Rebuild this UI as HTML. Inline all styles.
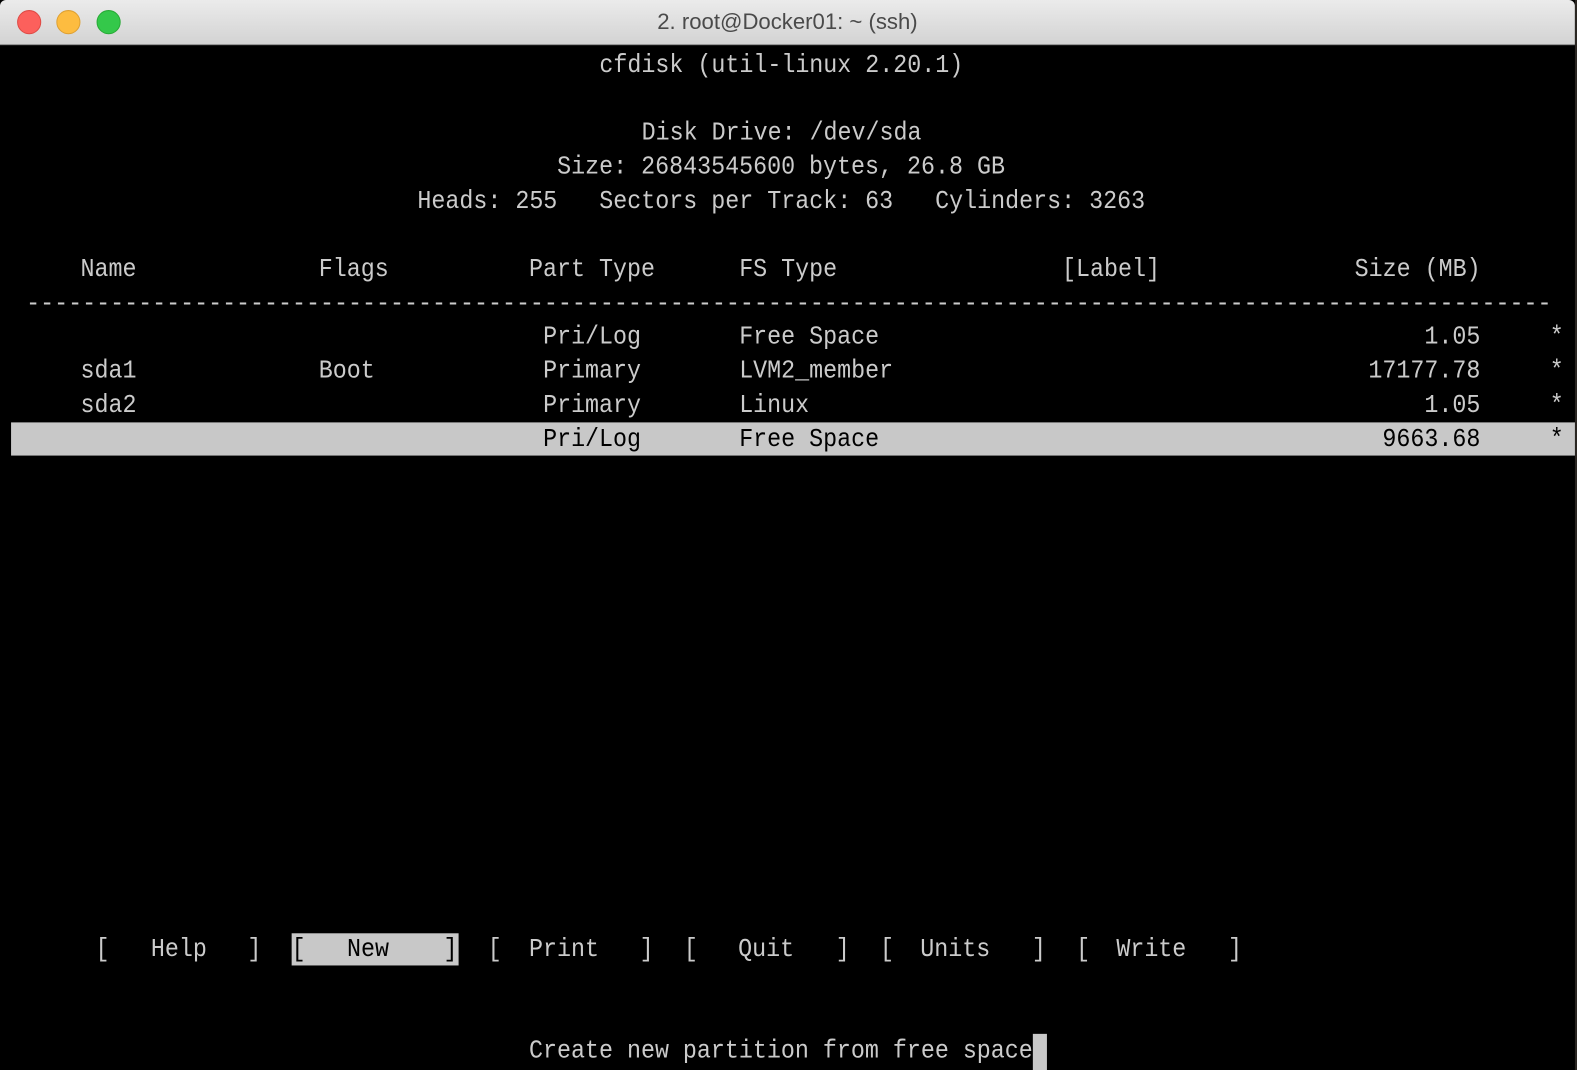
<!DOCTYPE html>
<html><head><meta charset="utf-8"><style>
html,body{margin:0;padding:0;width:1577px;height:1064px;overflow:hidden;background:#2a2622}
#wrap{position:absolute;left:0;top:0;width:1568px;height:1058px;transform:scale(1.0057);transform-origin:0 0}
#win{position:absolute;left:0;top:0;width:1566px;height:1064px;background:#000;}
#tb{position:absolute;left:0;top:0;width:1566px;height:44px;background:linear-gradient(#ebebeb,#d3d3d3);border-bottom:1px solid #b0b0b0;border-radius:6px 6px 0 0}
#tb .t{position:absolute;left:0;width:1566px;top:9px;text-align:center;font:22px "Liberation Sans",sans-serif;color:#4a4a4a}
.c{position:absolute;top:10px;width:24px;height:24px;border-radius:50%}
.s{position:absolute;font:23.2px "Liberation Mono",monospace;color:#cbcbcb;line-height:34px;white-space:pre;transform:scaleY(1.1);transform-origin:0 50%}
.r{text-align:right;transform-origin:100% 50%}
</style></head><body>
<div id="wrap">
<div id="win">
<div id="tb"><div class="c" style="left:17px;background:#fc605c;border:1px solid #de4a45;width:22px;height:22px"></div><div class="c" style="left:56px;background:#fdbc40;border:1px solid #dea032;width:22px;height:22px"></div><div class="c" style="left:96px;background:#34c84a;border:1px solid #27aa35;width:22px;height:22px"></div><div class="t">2. root@Docker01: ~ (ssh)</div></div>

<div class="s" style="left:596px;top:48px">cfdisk (util-linux 2.20.1)</div>
<div class="s" style="left:638px;top:115px">Disk Drive: /dev/sda</div>
<div class="s" style="left:554px;top:149px">Size: 26843545600 bytes, 26.8 GB</div>
<div class="s" style="left:415px;top:183px">Heads: 255   Sectors per Track: 63   Cylinders: 3263</div>

<div class="s" style="left:80px;top:251px">Name</div>
<div class="s" style="left:317px;top:251px">Flags</div>
<div class="s" style="left:526px;top:251px">Part Type</div>
<div class="s" style="left:735px;top:251px">FS Type</div>
<div class="s" style="left:1056px;top:251px">[Label]</div>
<div class="s" style="left:1347px;top:251px">Size (MB)</div>
<div class="s" style="left:26px;top:285px;width:1515px;overflow:hidden">-----------------------------------------------------------------------------------------------------------------</div>

<div style="position:absolute;left:11px;top:420px;width:1555px;height:33px;background:#c8c8c8"></div>

<div class="s" style="left:540px;top:318px">Pri/Log</div>
<div class="s" style="left:735px;top:318px">Free Space</div>
<div class="s r" style="right:94px;top:318px">1.05</div>
<div class="s" style="left:1541px;top:318px">*</div>

<div class="s" style="left:80px;top:352px">sda1</div>
<div class="s" style="left:317px;top:352px">Boot</div>
<div class="s" style="left:540px;top:352px">Primary</div>
<div class="s" style="left:735px;top:352px">LVM2_member</div>
<div class="s r" style="right:94px;top:352px">17177.78</div>
<div class="s" style="left:1541px;top:352px">*</div>

<div class="s" style="left:80px;top:386px">sda2</div>
<div class="s" style="left:540px;top:386px">Primary</div>
<div class="s" style="left:735px;top:386px">Linux</div>
<div class="s r" style="right:94px;top:386px">1.05</div>
<div class="s" style="left:1541px;top:386px">*</div>

<div class="s" style="left:540px;top:420px;color:#000">Pri/Log</div>
<div class="s" style="left:735px;top:420px;color:#000">Free Space</div>
<div class="s r" style="right:94px;top:420px;color:#000">9663.68</div>
<div class="s" style="left:1541px;top:420px;color:#000">*</div>

<div style="position:absolute;left:290px;top:928px;width:166px;height:32px;background:#c8c8c8"></div>
<div class="s" style="left:95px;top:927px">[</div><div class="s" style="left:150px;top:927px">Help</div><div class="s" style="left:246px;top:927px">]</div>
<div class="s" style="left:290px;top:927px;color:#000">[</div><div class="s" style="left:345px;top:927px;color:#000">New</div><div class="s" style="left:441px;top:927px;color:#000">]</div>
<div class="s" style="left:485px;top:927px">[</div><div class="s" style="left:526px;top:927px">Print</div><div class="s" style="left:636px;top:927px">]</div>
<div class="s" style="left:680px;top:927px">[</div><div class="s" style="left:734px;top:927px">Quit</div><div class="s" style="left:831px;top:927px">]</div>
<div class="s" style="left:875px;top:927px">[</div><div class="s" style="left:915px;top:927px">Units</div><div class="s" style="left:1026px;top:927px">]</div>
<div class="s" style="left:1070px;top:927px">[</div><div class="s" style="left:1110px;top:927px">Write</div><div class="s" style="left:1221px;top:927px">]</div>

<div class="s" style="left:526px;top:1028px">Create new partition from free space</div>
<div style="position:absolute;left:1027px;top:1028px;width:14px;height:36px;background:#c8c8c8"></div>
</div>
</div>
</body></html>
